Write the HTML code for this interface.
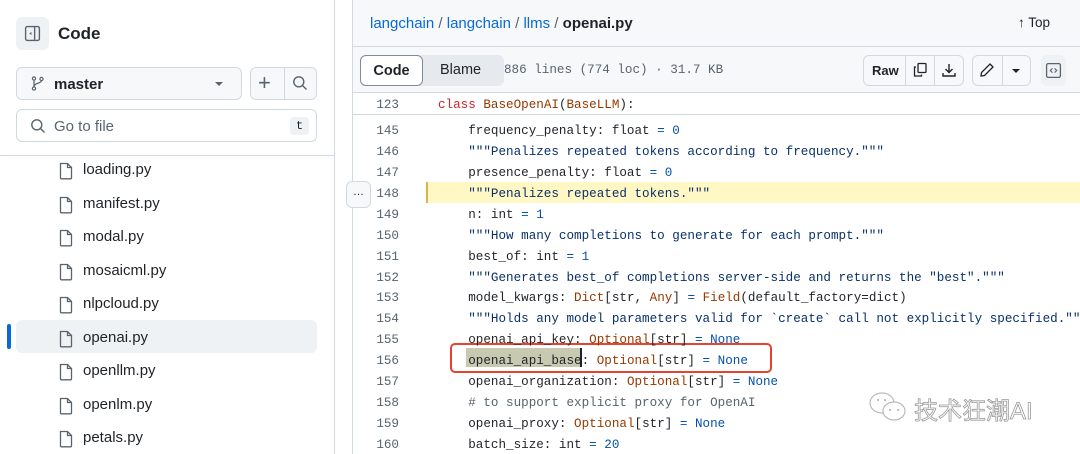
<!DOCTYPE html>
<html><head><meta charset="utf-8"><style>
*{margin:0;padding:0;box-sizing:border-box}
body{width:1080px;height:454px;overflow:hidden;background:#fff;font-family:"Liberation Sans",sans-serif;color:#1f2328;position:relative}
.a{position:absolute}
.mono{font-family:"Liberation Mono",monospace}
.ln{position:absolute;left:352px;width:47px;text-align:right;font-size:12.6px;color:#59636e;font-family:"Liberation Mono",monospace}
.cd{position:absolute;left:438px;font-size:12.6px;white-space:pre;font-family:"Liberation Mono",monospace;color:#1f2328}
.k{color:#cf222e}.t{color:#953800}.b{color:#0550ae}.s{color:#0a3069}.c{color:#59636e}
.file{position:absolute;left:58px;font-size:15px;color:#1f2328}
.file svg{position:absolute;left:0;top:1px}
.file span{position:absolute;left:25px;top:0;white-space:nowrap}
</style></head><body>
<div class="a" style="left:334px;top:0;width:1px;height:454px;background:#d1d9e0"></div>
<div class="a" style="left:16px;top:17px;width:33px;height:33px;border-radius:6px;background:#eff2f5"></div>
<svg class="a" style="left:24px;top:25px" width="17" height="17" viewBox="0 0 16 16"><rect x="1.5" y="1.5" width="13" height="13" rx="1.5" fill="none" stroke="#59636e" stroke-width="1.3"/><line x1="10" y1="2" x2="10" y2="14" stroke="#59636e" stroke-width="1.3"/><path d="M7 6.5 L5 8 L7 9.5Z" fill="#59636e"/></svg>
<div class="a" style="left:58px;top:24px;font-size:17px;font-weight:bold">Code</div>
<div class="a" style="left:16px;top:67px;width:226px;height:33px;border:1px solid #d1d9e0;border-radius:6px;background:#f6f8fa"></div>
<svg class="a" style="left:30px;top:75px" width="16" height="17" viewBox="0 0 16 16"><circle cx="4" cy="3" r="1.6" fill="none" stroke="#59636e" stroke-width="1.2"/><circle cx="4" cy="13" r="1.6" fill="none" stroke="#59636e" stroke-width="1.2"/><circle cx="11.5" cy="3.5" r="1.6" fill="none" stroke="#59636e" stroke-width="1.2"/><path d="M4 4.6V11.4M11.5 5.1C11.5 8 4 7.5 4 11" fill="none" stroke="#59636e" stroke-width="1.2"/></svg>
<div class="a" style="left:54px;top:76px;font-size:15px;font-weight:bold">master</div>
<div class="a" style="left:215px;top:82px;width:0;height:0;border-left:4px solid transparent;border-right:4px solid transparent;border-top:4px solid #59636e"></div>
<div class="a" style="left:250px;top:67px;width:67px;height:33px;border:1px solid #d1d9e0;border-radius:6px;background:#f6f8fa"></div>
<div class="a" style="left:284px;top:68px;width:1px;height:31px;background:#d1d9e0"></div>
<div class="a" style="left:258px;top:70px;font-size:22px;color:#59636e">+</div>
<svg class="a" style="left:292px;top:75px" width="16" height="16" viewBox="0 0 16 16"><circle cx="6.8" cy="6.8" r="5" fill="none" stroke="#59636e" stroke-width="1.4"/><line x1="10.5" y1="10.5" x2="14.5" y2="14.5" stroke="#59636e" stroke-width="1.4"/></svg>
<div class="a" style="left:16px;top:109px;width:301px;height:33px;border:1px solid #d1d9e0;border-radius:6px"></div>
<svg class="a" style="left:30px;top:118px" width="16" height="16" viewBox="0 0 16 16"><circle cx="6.8" cy="6.8" r="5" fill="none" stroke="#59636e" stroke-width="1.4"/><line x1="10.5" y1="10.5" x2="14.5" y2="14.5" stroke="#59636e" stroke-width="1.4"/></svg>
<div class="a" style="left:54px;top:118px;font-size:15px;color:#59636e">Go to file</div>
<div class="a mono" style="left:290px;top:117px;width:19px;height:18px;border-radius:4px;background:#eff2f5;font-size:12px;text-align:center;line-height:18px">t</div>
<div class="a" style="left:0;top:155px;width:334px;height:1px;background:#d1d9e0;box-shadow:0 2px 5px rgba(0,0,0,.06)"></div>
<div class="a" style="left:16px;top:320px;width:301px;height:33px;border-radius:6px;background:#eff2f5"></div>
<div class="a" style="left:7px;top:324px;width:4px;height:25px;border-radius:2px;background:#0969da"></div>
<div id="files"></div>
<div class="a" style="left:352px;top:0;width:728px;height:92px;background:#f6f8fa;border-left:1px solid #d1d9e0"></div>
<div class="a" style="left:352px;top:46px;width:728px;height:1px;background:#d1d9e0"></div>
<div class="a" style="left:352px;top:92px;width:728px;height:1px;background:#d1d9e0"></div>
<div class="a" style="left:352px;top:0;width:1px;height:454px;background:#d1d9e0"></div>
<div class="a" style="left:370px;top:15px;font-size:15px;color:#59636e"><span style="color:#0969da">langchain</span> / <span style="color:#0969da">langchain</span> / <span style="color:#0969da">llms</span> / <b style="color:#1f2328">openai.py</b></div>
<div class="a" style="left:1018px;top:15px;font-size:13.5px">↑ Top</div>
<div class="a" style="left:360px;top:55px;width:144px;height:31px;border-radius:6px;background:#e6eaef"></div>
<div class="a" style="left:360px;top:55px;width:63px;height:31px;border:1px solid #818b98;border-radius:6px;background:#fff;font-size:14.5px;font-weight:bold;text-align:center;line-height:31px">Code</div>
<div class="a" style="left:440px;top:62px;font-size:14.5px;line-height:17px;top:62px">Blame</div>
<div class="a mono" style="left:504px;top:63px;font-size:12.6px;color:#59636e">886 lines (774 loc) · 31.7 KB</div>
<div class="a" style="left:863px;top:55px;width:101px;height:31px;border:1px solid #d1d9e0;border-radius:6px;background:#f6f8fa"></div>
<div class="a" style="left:872px;top:63px;font-size:13px;font-weight:bold">Raw</div>
<div class="a" style="left:905px;top:56px;width:1px;height:29px;background:#d1d9e0"></div>
<div class="a" style="left:934px;top:56px;width:1px;height:29px;background:#d1d9e0"></div>
<svg class="a" style="left:912px;top:62px" width="16" height="16" viewBox="0 0 16 16"><path d="M4 5H2.5v9h7V12.5" fill="none" stroke="#1f2328" stroke-width="1.3"/><rect x="6" y="1.5" width="8" height="9" rx="1" fill="none" stroke="#1f2328" stroke-width="1.3"/></svg>
<svg class="a" style="left:941px;top:62px" width="16" height="16" viewBox="0 0 16 16"><path d="M8 2v8M4.5 7L8 10.5 11.5 7M2 11v3h12v-3" fill="none" stroke="#1f2328" stroke-width="1.4"/></svg>
<div class="a" style="left:972px;top:55px;width:59px;height:31px;border:1px solid #d1d9e0;border-radius:6px;background:#f6f8fa"></div>
<div class="a" style="left:1002px;top:56px;width:1px;height:29px;background:#d1d9e0"></div>
<svg class="a" style="left:979px;top:62px" width="16" height="16" viewBox="0 0 16 16"><path d="M11 2l3 3-8.5 8.5L2 14l.5-3.5z" fill="none" stroke="#1f2328" stroke-width="1.3"/></svg>
<div class="a" style="left:1012px;top:69px;border-left:4px solid transparent;border-right:4px solid transparent;border-top:4px solid #1f2328"></div>
<div class="a" style="left:1041px;top:55px;width:25px;height:31px;border-radius:6px;background:#eff2f5"></div>
<svg class="a" style="left:1045px;top:62px" width="17" height="17" viewBox="0 0 16 16"><rect x="1.5" y="1.5" width="13" height="13" rx="1.5" fill="none" stroke="#59636e" stroke-width="1.2"/><path d="M7 6L5 8l2 2M9 6l2 2-2 2" fill="none" stroke="#59636e" stroke-width="1.1"/></svg>
<div class="a" style="left:352px;top:114px;width:728px;height:1px;background:#d1d9e0"></div>
<div class="ln" style="top:98px">123</div>
<div class="cd" style="top:98px"><span class="k">class</span> <span class="t">BaseOpenAI</span>(<span class="t">BaseLLM</span>):</div>
<div class="a" style="left:426px;top:182px;width:654px;height:21px;background:#fff8c5"></div>
<div class="a" style="left:426px;top:182px;width:2px;height:21px;background:#bf8700;opacity:.6"></div>
<div class="a" style="left:346px;top:181px;width:25px;height:27px;border:1px solid #d1d9e0;border-radius:6px;background:#f6f8fa;font-size:11px;text-align:center;line-height:20px;color:#1f2328">…</div>
<div class="a" style="left:466px;top:348px;width:115px;height:19px;background:#c7c9b1"></div>
<div class="a" style="left:580px;top:348px;width:2px;height:19px;background:#1f2328"></div>
<div class="a" style="left:450px;top:343px;width:322px;height:30px;border:2.5px solid #e5432f;border-radius:5px"></div>
<div id="code"></div>
<svg class="a" style="left:868px;top:391px" width="42" height="32" viewBox="0 0 42 32"><ellipse cx="14" cy="12" rx="12" ry="10" fill="#fff" stroke="#bbb" stroke-width="1.2"/><ellipse cx="26" cy="20" rx="11" ry="9" fill="#fff" stroke="#bbb" stroke-width="1.2"/><circle cx="10" cy="9" r="1" fill="#aaa"/><circle cx="17" cy="9" r="1" fill="#aaa"/><circle cx="22" cy="19" r="1" fill="#aaa"/><circle cx="30" cy="19" r="1" fill="#aaa"/></svg>
<div class="a" style="left:914px;top:391px;font-size:24px;color:#fff;-webkit-text-stroke:0.8px #999;font-family:'Liberation Sans','Noto Sans CJK SC',sans-serif">技术狂潮AI</div>
<script>
var f=["loading.py","manifest.py","modal.py","mosaicml.py","nlpcloud.py","openai.py","openllm.py","openlm.py","petals.py"],h="";
f.forEach(function(n,i){var y=161+i*33.5;h+='<div class="file" style="top:'+y+'px"><svg width="16" height="18" viewBox="0 0 16 18"><path d="M2.5 1.5h7l4 4v10.5a.8.8 0 0 1-.8.8H3.3a.8.8 0 0 1-.8-.8z M9.5 1.5v4h4" fill="none" stroke="#59636e" stroke-width="1.3"/></svg><span>'+n+'</span></div>'});
document.getElementById("files").innerHTML=h;
var L=[
[145,'    frequency_penalty: float <span class="b">=</span> <span class="b">0</span>'],
[146,'    <span class="s">"""Penalizes repeated tokens according to frequency."""</span>'],
[147,'    presence_penalty: float <span class="b">=</span> <span class="b">0</span>'],
[148,'    <span class="s">"""Penalizes repeated tokens."""</span>'],
[149,'    n: int <span class="b">=</span> <span class="b">1</span>'],
[150,'    <span class="s">"""How many completions to generate for each prompt."""</span>'],
[151,'    best_of: int <span class="b">=</span> <span class="b">1</span>'],
[152,'    <span class="s">"""Generates best_of completions server-side and returns the "best"."""</span>'],
[153,'    model_kwargs: <span class="t">Dict</span>[str, <span class="t">Any</span>] <span class="b">=</span> <span class="t">Field</span>(default_factory=dict)'],
[154,'    <span class="s">"""Holds any model parameters valid for `create` call not explicitly specified."""</span>'],
[155,'    openai_api_key: <span class="t">Optional</span>[str] <span class="b">= None</span>'],
[156,'    openai_api_base: <span class="t">Optional</span>[str] <span class="b">= None</span>'],
[157,'    openai_organization: <span class="t">Optional</span>[str] <span class="b">= None</span>'],
[158,'    <span class="c"># to support explicit proxy for OpenAI</span>'],
[159,'    openai_proxy: <span class="t">Optional</span>[str] <span class="b">= None</span>'],
[160,'    batch_size: int <span class="b">=</span> <span class="b">20</span>']],c="";
L.forEach(function(l,i){var y=124+i*20.93;c+='<div class="ln" style="top:'+y+'px">'+l[0]+'</div><div class="cd" style="top:'+y+'px">'+l[1]+'</div>'});
document.getElementById("code").innerHTML=c;
</script>
</body></html>
